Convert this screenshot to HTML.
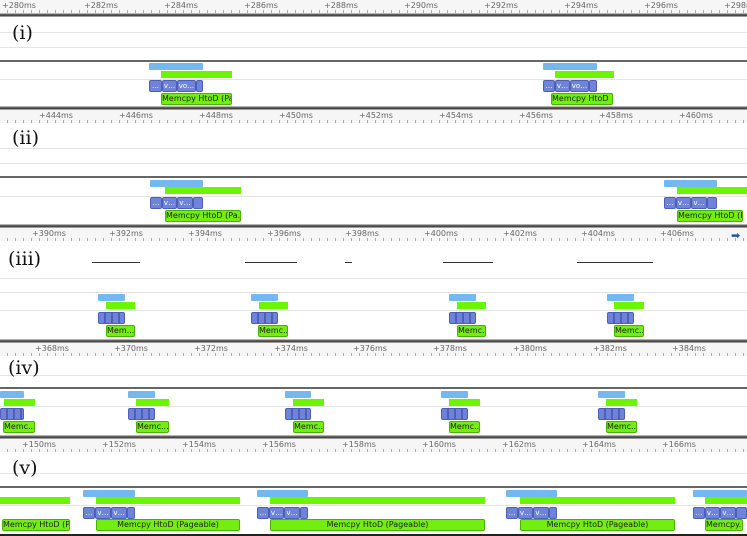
<!DOCTYPE html>
<html><head><meta charset="utf-8"><style>
*{margin:0;padding:0;box-sizing:border-box}
body{width:747px;height:536px;background:#fff;position:relative;overflow:hidden;font-family:"DejaVu Sans","Liberation Sans",sans-serif}
div,span{position:absolute}
.rul{left:0;width:747px;height:13px;background:#f6f6f6;
 background-image:repeating-linear-gradient(90deg,transparent 0,transparent 7px,#aaa 7px,#aaa 8px);
 background-size:100% 3px;background-repeat:no-repeat;background-position:0 10px}
.t{font-size:8px;color:#666;top:1px;transform:translateX(-50%);white-space:nowrap}
.sep{left:0;width:747px;height:4px;background:linear-gradient(#ddd,#555 40%,#333 60%,#ccc)}
.hl{left:0;width:747px;height:1px;background:#e4e4e4}
.dv{left:0;width:747px;height:2px;background:#666}
.lab{font-family:"DejaVu Serif","Liberation Serif",serif;font-size:19px;color:#111;left:12px}
.lb{background:#73b8ef;height:7px;border-radius:1px}
.g{background:#6cf500;height:7px}
.bb{height:12px;background:#6f84d8;border:1px solid #4c60b8;border-radius:2px;font-size:7px;color:#fff;line-height:10px;text-align:center;overflow:hidden}
.sg{background:repeating-linear-gradient(90deg,#6f84d8 0,#6f84d8 5px,#4c60b8 5px,#4c60b8 7px)}
.gl{height:12px;background:#72ee10;border:1px solid #4cb000;border-radius:2px;font-size:8px;color:#222;line-height:10px;text-align:center;white-space:nowrap;overflow:hidden}
.bl{height:1px;background:#333}
</style></head><body>

<!-- Panel i -->
<div class="rul" style="top:0"></div>
<span class="t" style="left:19px">+280ms</span><span class="t" style="left:101px">+282ms</span><span class="t" style="left:181px">+284ms</span><span class="t" style="left:261px">+286ms</span><span class="t" style="left:341px">+288ms</span><span class="t" style="left:421px">+290ms</span><span class="t" style="left:501px">+292ms</span><span class="t" style="left:581px">+294ms</span><span class="t" style="left:661px">+296ms</span><span class="t" style="left:741px">+298ms</span>
<div class="sep" style="top:13px"></div>
<div class="hl" style="top:32px"></div><div class="hl" style="top:47px"></div>
<div class="dv" style="top:60px"></div><div class="hl" style="top:79px"></div>
<span class="lab" style="top:22px">(i)</span>
<div class="lb" style="left:149px;top:63px;width:54px"></div>
<div class="g" style="left:161px;top:71px;width:71px"></div>
<div class="bb" style="left:149px;top:80px;width:13px">…</div><div class="bb" style="left:162px;top:80px;width:15px">v…</div><div class="bb" style="left:177px;top:80px;width:19px">vo…</div><div class="bb" style="left:196px;top:80px;width:7px"></div>
<div class="gl" style="left:161px;top:93px;width:71px">Memcpy HtoD (Pa...</div>
<div class="lb" style="left:543px;top:63px;width:54px"></div>
<div class="g" style="left:555px;top:71px;width:59px"></div>
<div class="bb" style="left:543px;top:80px;width:12px">…</div><div class="bb" style="left:555px;top:80px;width:15px">v…</div><div class="bb" style="left:570px;top:80px;width:19px">vo…</div><div class="bb" style="left:589px;top:80px;width:8px"></div>
<div class="gl" style="left:551px;top:93px;width:62px">Memcpy HtoD ...</div>
<div class="sep" style="top:106px"></div>

<!-- Panel ii -->
<div class="rul" style="top:110px"></div>
<span class="t" style="top:111px;left:56px">+444ms</span><span class="t" style="top:111px;left:136px">+446ms</span><span class="t" style="top:111px;left:216px">+448ms</span><span class="t" style="top:111px;left:296px">+450ms</span><span class="t" style="top:111px;left:376px">+452ms</span><span class="t" style="top:111px;left:456px">+454ms</span><span class="t" style="top:111px;left:536px">+456ms</span><span class="t" style="top:111px;left:616px">+458ms</span><span class="t" style="top:111px;left:696px">+460ms</span>
<div class="hl" style="top:148px"></div><div class="hl" style="top:163px"></div>
<div class="dv" style="top:176px"></div><div class="hl" style="top:196px"></div>
<span class="lab" style="top:127px">(ii)</span>
<div class="lb" style="left:150px;top:180px;width:53px"></div>
<div class="g" style="left:165px;top:187px;width:76px"></div>
<div class="bb" style="left:150px;top:197px;width:12px">…</div><div class="bb" style="left:162px;top:197px;width:15px">v…</div><div class="bb" style="left:177px;top:197px;width:16px">v…</div><div class="bb" style="left:193px;top:197px;width:10px"></div>
<div class="gl" style="left:165px;top:210px;width:76px">Memcpy HtoD (Pa...</div>
<div class="lb" style="left:664px;top:180px;width:53px"></div>
<div class="g" style="left:677px;top:187px;width:70px"></div>
<div class="bb" style="left:664px;top:197px;width:12px">…</div><div class="bb" style="left:676px;top:197px;width:15px">v…</div><div class="bb" style="left:691px;top:197px;width:16px">v…</div><div class="bb" style="left:707px;top:197px;width:10px"></div>
<div class="gl" style="left:677px;top:210px;width:66px">Memcpy HtoD (P...</div>
<div class="sep" style="top:224px"></div>

<!-- Panel iii -->
<div class="rul" style="top:228px"></div>
<span class="t" style="top:229px;left:49px">+390ms</span><span class="t" style="top:229px;left:126px">+392ms</span><span class="t" style="top:229px;left:205px">+394ms</span><span class="t" style="top:229px;left:284px">+396ms</span><span class="t" style="top:229px;left:362px">+398ms</span><span class="t" style="top:229px;left:441px">+400ms</span><span class="t" style="top:229px;left:520px">+402ms</span><span class="t" style="top:229px;left:598px">+404ms</span><span class="t" style="top:229px;left:677px">+406ms</span>
<span style="left:731px;top:229px;font-size:11px;color:#1d5a9a">➡</span>
<div class="bl" style="left:92px;top:262px;width:48px"></div><div class="bl" style="left:245px;top:262px;width:52px"></div><div class="bl" style="left:345px;top:262px;width:7px"></div><div class="bl" style="left:443px;top:262px;width:50px"></div><div class="bl" style="left:577px;top:262px;width:76px"></div>
<div class="hl" style="top:278px"></div><div class="hl" style="top:292px"></div><div class="hl" style="top:310px"></div>
<span class="lab" style="top:248px;left:8px">(iii)</span>
<div class="lb" style="left:98px;top:294px;width:27px"></div><div class="g" style="left:106px;top:302px;width:29px"></div><div class="bb sg" style="left:98px;top:312px;width:27px"></div><div class="gl" style="left:106px;top:325px;width:29px">Mem...</div>
<div class="lb" style="left:251px;top:294px;width:27px"></div><div class="g" style="left:259px;top:302px;width:29px"></div><div class="bb sg" style="left:251px;top:312px;width:27px"></div><div class="gl" style="left:258px;top:325px;width:30px">Memc...</div>
<div class="lb" style="left:449px;top:294px;width:27px"></div><div class="g" style="left:457px;top:302px;width:29px"></div><div class="bb sg" style="left:449px;top:312px;width:27px"></div><div class="gl" style="left:457px;top:325px;width:29px">Memc...</div>
<div class="lb" style="left:607px;top:294px;width:27px"></div><div class="g" style="left:614px;top:302px;width:30px"></div><div class="bb sg" style="left:607px;top:312px;width:27px"></div><div class="gl" style="left:614px;top:325px;width:30px">Memc...</div>
<div class="sep" style="top:339px"></div>

<!-- Panel iv -->
<div class="rul" style="top:343px"></div>
<span class="t" style="top:344px;left:52px">+368ms</span><span class="t" style="top:344px;left:131px">+370ms</span><span class="t" style="top:344px;left:211px">+372ms</span><span class="t" style="top:344px;left:291px">+374ms</span><span class="t" style="top:344px;left:370px">+376ms</span><span class="t" style="top:344px;left:450px">+378ms</span><span class="t" style="top:344px;left:530px">+380ms</span><span class="t" style="top:344px;left:610px">+382ms</span><span class="t" style="top:344px;left:689px">+384ms</span>
<div class="hl" style="top:375px"></div>
<div class="dv" style="top:387px"></div><div class="hl" style="top:406px"></div>
<span class="lab" style="top:357px;left:8px">(iv)</span>
<div class="lb" style="left:0;top:391px;width:24px"></div><div class="g" style="left:4px;top:399px;width:31px"></div><div class="bb sg" style="left:0;top:408px;width:24px"></div><div class="gl" style="left:3px;top:421px;width:32px">Memc...</div>
<div class="lb" style="left:128px;top:391px;width:27px"></div><div class="g" style="left:136px;top:399px;width:33px"></div><div class="bb sg" style="left:128px;top:408px;width:27px"></div><div class="gl" style="left:136px;top:421px;width:33px">Memc...</div>
<div class="lb" style="left:285px;top:391px;width:26px"></div><div class="g" style="left:293px;top:399px;width:31px"></div><div class="bb sg" style="left:285px;top:408px;width:26px"></div><div class="gl" style="left:293px;top:421px;width:31px">Memc...</div>
<div class="lb" style="left:441px;top:391px;width:27px"></div><div class="g" style="left:449px;top:399px;width:31px"></div><div class="bb sg" style="left:441px;top:408px;width:27px"></div><div class="gl" style="left:449px;top:421px;width:31px">Memc...</div>
<div class="lb" style="left:598px;top:391px;width:27px"></div><div class="g" style="left:606px;top:399px;width:31px"></div><div class="bb sg" style="left:598px;top:408px;width:27px"></div><div class="gl" style="left:606px;top:421px;width:31px">Memc...</div>
<div class="sep" style="top:435px"></div>

<!-- Panel v -->
<div class="rul" style="top:439px"></div>
<span class="t" style="top:440px;left:39px">+150ms</span><span class="t" style="top:440px;left:119px">+152ms</span><span class="t" style="top:440px;left:199px">+154ms</span><span class="t" style="top:440px;left:279px">+156ms</span><span class="t" style="top:440px;left:359px">+158ms</span><span class="t" style="top:440px;left:439px">+160ms</span><span class="t" style="top:440px;left:519px">+162ms</span><span class="t" style="top:440px;left:599px">+164ms</span><span class="t" style="top:440px;left:679px">+166ms</span>
<div class="hl" style="top:473px"></div>
<div class="dv" style="top:486px"></div><div class="hl" style="top:505px"></div>
<span class="lab" style="top:457px;left:12px">(v)</span>
<div class="lb" style="left:83px;top:490px;width:52px"></div><div class="lb" style="left:257px;top:490px;width:51px"></div><div class="lb" style="left:506px;top:490px;width:51px"></div><div class="lb" style="left:693px;top:490px;width:54px"></div>
<div class="g" style="left:0;top:497px;width:70px"></div><div class="g" style="left:96px;top:497px;width:144px"></div><div class="g" style="left:270px;top:497px;width:215px"></div><div class="g" style="left:520px;top:497px;width:155px"></div><div class="g" style="left:705px;top:497px;width:42px"></div>
<div class="bb" style="left:83px;top:507px;width:12px">…</div><div class="bb" style="left:95px;top:507px;width:16px">v…</div><div class="bb" style="left:111px;top:507px;width:16px">v…</div><div class="bb" style="left:127px;top:507px;width:8px"></div>
<div class="bb" style="left:257px;top:507px;width:12px">…</div><div class="bb" style="left:269px;top:507px;width:15px">v…</div><div class="bb" style="left:284px;top:507px;width:16px">v…</div><div class="bb" style="left:300px;top:507px;width:8px"></div>
<div class="bb" style="left:506px;top:507px;width:12px">…</div><div class="bb" style="left:518px;top:507px;width:15px">v…</div><div class="bb" style="left:533px;top:507px;width:16px">v…</div><div class="bb" style="left:549px;top:507px;width:8px"></div>
<div class="bb" style="left:693px;top:507px;width:12px">…</div><div class="bb" style="left:705px;top:507px;width:15px">v…</div><div class="bb" style="left:720px;top:507px;width:16px">v…</div><div class="bb" style="left:736px;top:507px;width:11px"></div>
<div class="gl" style="left:2px;top:519px;width:68px">Memcpy HtoD (P...</div>
<div class="gl" style="left:96px;top:519px;width:144px">Memcpy HtoD (Pageable)</div>
<div class="gl" style="left:270px;top:519px;width:215px">Memcpy HtoD (Pageable)</div>
<div class="gl" style="left:520px;top:519px;width:155px">Memcpy HtoD (Pageable)</div>
<div class="gl" style="left:705px;top:519px;width:38px">Memcpy...</div>
<div style="left:0;top:534px;width:747px;height:2px;background:#222"></div>
</body></html>
